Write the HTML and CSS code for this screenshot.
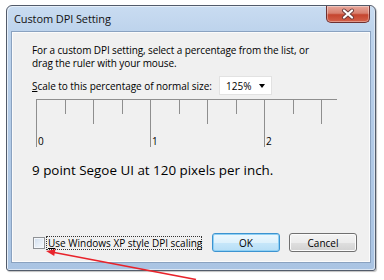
FILE: index.html
```html
<!DOCTYPE html>
<html>
<head>
<meta charset="utf-8">
<link rel="stylesheet" href="styles.css">
</head>
<body>
<div class="window">
  <div class="titlebar">
    <span class="title">Custom DPI Setting</span>
    <div class="close">
      <svg width="16" height="12" viewBox="0 0 16 12">
        <path d="M4 2.5 L12 9.5 M12 2.5 L4 9.5" stroke="#6b3a3a" stroke-width="4" stroke-linecap="round"/>
        <path d="M4 2.5 L12 9.5 M12 2.5 L4 9.5" stroke="#ffffff" stroke-width="2.2" stroke-linecap="round"/>
      </svg>
    </div>
  </div>
  <div class="client">
    <p class="intro">For a custom DPI setting, select a percentage from the list, or<br>drag the ruler with your mouse.</p>
    <div class="scale-row">
      <span class="scale-label"><u>S</u>cale to this percentage of normal size:</span>
      <div class="select"><span class="value">125%</span><span class="caret"></span></div>
    </div>
    <div class="ruler">
      <div class="cell long"><span class="num">0</span></div>
      <div class="cell short"></div>
      <div class="cell medium"></div>
      <div class="cell short"></div>
      <div class="cell long"><span class="num">1</span></div>
      <div class="cell short"></div>
      <div class="cell medium"></div>
      <div class="cell short"></div>
      <div class="cell long"><span class="num">2</span></div>
      <div class="cell short"></div>
      <div class="cell medium last"></div>
    </div>
    <p class="sample">9 point Segoe UI at 120 pixels per inch.</p>
    <div class="footer">
      <span class="box"></span>
      <span class="focus"><u>U</u>se Windows XP style DPI scaling</span>
      <button class="btn ok">OK</button>
      <button class="btn cancel">Cancel</button>
    </div>
  </div>
</div>
<svg class="arrow" width="384" height="280" viewBox="0 0 384 280">
  <line x1="196" y1="279.5" x2="53" y2="252.3" stroke="#e8232b" stroke-width="1.6"/>
  <polygon points="46,251 55.5,249.2 54.2,256.1" fill="#e8232b"/>
</svg>
</body>
</html>
```
FILE: styles.css
```css
html, body {
  margin: 0;
  padding: 0;
  background: #ffffff;
}
body {
  position: relative;
  width: 384px;
  height: 280px;
  overflow: hidden;
  font-family: "Open Sans", "Noto Sans", sans-serif;
  color: #000;
}
.window {
  margin: 5px 0 0 6px;
  width: 370px;
  height: 266px;
  box-sizing: border-box;
  border: 1px solid #525b6a;
  border-radius: 6px 6px 3px 3px;
  background: linear-gradient(to bottom, #c9dcf1 0px, #bdd3ec 26px, #b3cbe7 120px, #aac4e3 266px);
  box-shadow: inset 1px 1px 0 #e6eff9, inset -1px -1px 0 #dbe6f3, 1px 1px 1px rgba(0,0,0,0.25);
  display: flex;
  flex-direction: column;
  padding: 0 5px 8px 5px;
}
.titlebar {
  height: 26px;
  flex: none;
  display: flex;
  justify-content: space-between;
  align-items: flex-start;
}
.title {
  font-size: 11px;
  line-height: 26px;
  padding-left: 2px;
  color: #121212;
  letter-spacing: -0.1px;
}
.close {
  width: 44px;
  height: 17px;
  box-sizing: border-box;
  border: 1px solid #6e3030;
  border-top: none;
  border-radius: 0 0 5px 5px;
  background: linear-gradient(to bottom, #e8a69a 0%, #d8806f 45%, #c5452f 55%, #d4614a 100%);
  display: flex;
  align-items: center;
  justify-content: center;
  box-shadow: inset 0 0 0 1px rgba(255,255,255,0.35);
}
.client {
  flex: 1;
  background: #f0f0f0;
  border: 1px solid #fbfbfb;
  box-shadow: 0 0 0 1px #8aa2c0;
  display: flex;
  flex-direction: column;
  padding: 0 12px 9px 19px;
  font-size: 10px;
}
.intro {
  margin: 11px 0 0 0;
  line-height: 13px;
  letter-spacing: -0.1px;
}
.scale-row {
  margin-top: 6px;
  height: 19px;
  display: flex;
  align-items: center;
}
.scale-label {
  width: 187px;
  flex: none;
  line-height: 12px;
  letter-spacing: -0.05px;
}
.select {
  width: 53px;
  height: 19px;
  box-sizing: border-box;
  background: #ffffff;
  border: 1px solid #e2e2e2;
  display: flex;
  align-items: center;
  justify-content: space-between;
  padding: 0 6px 0 6px;
}
.caret {
  width: 0;
  height: 0;
  border-left: 3.5px solid transparent;
  border-right: 3.5px solid transparent;
  border-top: 4px solid #000;
}
.ruler {
  margin: 4px 0 0 4px;
  width: 301px;
  height: 48px;
  border-top: 1px solid #8e8e8e;
  display: flex;
  flex: none;
}
.cell {
  width: 28.5px;
  flex: none;
  position: relative;
}
.cell.last {
  width: 16px;
}
.cell::before {
  content: "";
  position: absolute;
  left: 0;
  top: 0;
  width: 1px;
  background: #8e8e8e;
}
.cell.short::before { height: 14px; }
.cell.medium::before { height: 24px; }
.cell.long::before { height: 47px; }
.num {
  position: absolute;
  left: 2px;
  top: 36px;
  font-size: 10px;
  line-height: 11px;
}
.sample {
  margin: 14px 0 0 0;
  font-size: 13.4px;
  line-height: 16px;
}
.footer {
  margin-top: auto;
  height: 19px;
  display: flex;
  align-items: center;
}
.box {
  width: 12px;
  height: 12px;
  box-sizing: border-box;
  margin-left: 1px;
  border: 1px solid #8f9296;
  background: linear-gradient(135deg, #cfdcec 0%, #e9f0f8 60%, #f6f9fc 100%);
  box-shadow: inset 0 0 0 1px #f4f7fb;
  flex: none;
}
.focus {
  margin-left: 1px;
  padding: 0 1px;
  border: 1px dotted #333;
  line-height: 12px;
  width: 152px;
  white-space: nowrap;
}
.btn {
  width: 68px;
  height: 19px;
  box-sizing: border-box;
  font-family: "Open Sans", "Noto Sans", sans-serif;
  font-size: 10px;
  color: #000;
  padding: 0;
  border-radius: 3px;
  flex: none;
}
.ok {
  margin-left: auto;
  border: 1px solid #3c93d0;
  background: linear-gradient(to bottom, #eef8fe 0%, #ddf1fc 50%, #c7e7fa 51%, #b6def6 100%);
  box-shadow: inset 0 0 0 1px #8fd0f4;
}
.cancel {
  margin-left: 9px;
  border: 1px solid #707070;
  background: linear-gradient(to bottom, #f4f4f4 0%, #ececec 50%, #dfdfdf 51%, #d2d2d2 100%);
  box-shadow: inset 0 0 0 1px #fbfbfb;
}
.arrow {
  position: absolute;
  left: 0;
  top: 0;
  pointer-events: none;
}
```
